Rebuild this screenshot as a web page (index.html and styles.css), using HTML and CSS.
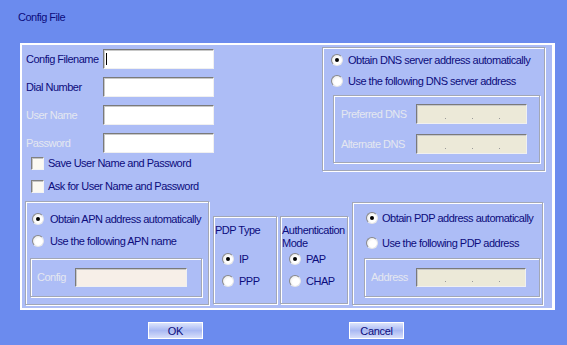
FILE: index.html
```html
<!DOCTYPE html>
<html lang="en">
<head>
    <meta charset="UTF-8">
    <title>Config File</title>
    <link rel="stylesheet" href="styles.css">
</head>
<body>
    <div class="title">Config File</div>

    <div class="panel">
        <div class="top-row">
            <div class="form">
                <div class="form-row">
                    <span class="label">Config Filename</span>
                    <div class="field"><span class="caret"></span></div>
                </div>
                <div class="form-row">
                    <span class="label">Dial Number</span>
                    <div class="field"></div>
                </div>
                <div class="form-row">
                    <span class="label disabled">User Name</span>
                    <div class="field"></div>
                </div>
                <div class="form-row">
                    <span class="label disabled">Password</span>
                    <div class="field"></div>
                </div>
                <div class="check-row">
                    <span class="checkbox"></span>
                    <span>Save User Name and Password</span>
                </div>
                <div class="check-row second">
                    <span class="checkbox"></span>
                    <span>Ask for User Name and Password</span>
                </div>
            </div>

            <div class="group dns-box">
                <div class="radio-row">
                    <span class="radio checked"></span>
                    <span>Obtain DNS server address automatically</span>
                </div>
                <div class="radio-row">
                    <span class="radio"></span>
                    <span>Use the following DNS server address</span>
                </div>
                <div class="group dns-inner">
                    <div class="ip-row">
                        <span class="label disabled dns-label">Preferred DNS</span>
                        <div class="field ip"><i></i><i></i><i></i></div>
                    </div>
                    <div class="ip-row">
                        <span class="label disabled dns-label">Alternate DNS</span>
                        <div class="field ip"><i></i><i></i><i></i></div>
                    </div>
                </div>
            </div>
        </div>

        <div class="bottom-row">
            <div class="group apn-box">
                <div class="radio-row">
                    <span class="radio checked"></span>
                    <span>Obtain APN address automatically</span>
                </div>
                <div class="radio-row">
                    <span class="radio"></span>
                    <span>Use the following APN name</span>
                </div>
                <div class="group apn-inner">
                    <span class="label disabled apn-label">Config</span>
                    <div class="field apn-field"></div>
                </div>
            </div>

            <div class="group type-box pdp-type">
                <div class="type-title">PDP Type</div>
                <div class="radio-row">
                    <span class="radio checked"></span>
                    <span>IP</span>
                </div>
                <div class="radio-row">
                    <span class="radio"></span>
                    <span>PPP</span>
                </div>
            </div>

            <div class="group type-box auth-type">
                <div class="type-title">Authentication<br>Mode</div>
                <div class="radio-row">
                    <span class="radio checked"></span>
                    <span>PAP</span>
                </div>
                <div class="radio-row">
                    <span class="radio"></span>
                    <span>CHAP</span>
                </div>
            </div>

            <div class="group pdp-box">
                <div class="radio-row">
                    <span class="radio checked"></span>
                    <span>Obtain PDP address automatically</span>
                </div>
                <div class="radio-row">
                    <span class="radio"></span>
                    <span>Use the following PDP address</span>
                </div>
                <div class="group pdp-inner">
                    <span class="label disabled pdp-label">Address</span>
                    <div class="field ip"><i></i><i></i><i></i></div>
                </div>
            </div>
        </div>
    </div>

    <div class="buttons">
        <button class="btn">OK</button>
        <button class="btn">Cancel</button>
    </div>
</body>
</html>
```

FILE: styles.css
```css
* {
    box-sizing: border-box;
}
body {
    margin: 0;
    width: 567px;
    height: 345px;
    overflow: hidden;
    background-color: #6b8bee;
    font-family: "Liberation Sans", Arial, sans-serif;
    font-size: 11px;
    letter-spacing: -0.5px;
    color: #0c0c7c;
}
.title {
    padding: 10px 0 0 18px;
    height: 43px;
    line-height: 14px;
}
.panel {
    margin-left: 20px;
    width: 535px;
    height: 267px;
    background-color: #adbdf6;
    border: 2px solid #fff;
    border-right-width: 3px;
}
.top-row {
    display: flex;
    align-items: flex-start;
    height: 156px;
    padding: 2px 0 0 4px;
}
.form {
    width: 296px;
    padding-top: 2px;
}
.form-row {
    display: flex;
    align-items: center;
    height: 20px;
    margin-bottom: 8px;
}
.label {
    flex-shrink: 0;
    width: 77px;
    white-space: nowrap;
}
.label.disabled {
    color: #e4e7f0;
}
.field {
    position: relative;
    flex-shrink: 0;
    width: 111px;
    height: 20px;
    background-color: #fff;
    border: 1px solid;
    border-color: #7a7a7a #f0f0f0 #f0f0f0 #7a7a7a;
    box-shadow: inset 1px 1px 0 #c8c8c8;
}
.caret {
    position: absolute;
    left: 2px;
    top: 3px;
    width: 1px;
    height: 12px;
    background-color: #000;
}
.check-row {
    display: flex;
    align-items: center;
    gap: 4px;
    height: 16px;
    margin: -6px 0 0 5px;
}
.check-row.second {
    margin-top: 7px;
}
.checkbox {
    flex-shrink: 0;
    width: 13px;
    height: 13px;
    background-color: #fbf9f2;
    border: 1px solid;
    border-color: #808080 #f4f4f4 #f4f4f4 #808080;
    box-shadow: inset 1px 1px 0 #c4c4c4;
}
.group {
    flex-shrink: 0;
    border: 1px solid #a2a7b6;
    box-shadow: inset 1px 1px 0 #fff, 1px 1px 0 #fff;
}
.radio-row {
    display: flex;
    align-items: center;
    gap: 5px;
    height: 14px;
    white-space: nowrap;
}
.radio {
    position: relative;
    flex-shrink: 0;
    width: 12px;
    height: 12px;
    border-radius: 50%;
    border: 1px solid;
    border-color: #8a8a8a #e8e8e8 #e8e8e8 #8a8a8a;
    background: radial-gradient(circle at 60% 60%, #fff 40%, #dcdcdc 100%);
}
.radio.checked::after {
    content: "";
    position: absolute;
    left: 3px;
    top: 3px;
    width: 4px;
    height: 4px;
    border-radius: 50%;
    background-color: #000;
}
.dns-box {
    width: 223px;
    height: 124px;
    padding: 5px 0 0 8px;
}
.dns-box .radio-row + .radio-row {
    margin-top: 7px;
}
.dns-inner {
    width: 207px;
    height: 68px;
    margin: 7px 0 0 2px;
    padding: 8px 0 0 7px;
}
.ip-row {
    display: flex;
    align-items: center;
    margin-bottom: 10px;
}
.dns-label {
    width: 75px;
}
.field.ip {
    display: flex;
    align-items: flex-end;
    gap: 26px;
    padding: 0 0 4px 28px;
    background-color: #ece9d8;
}
.field.ip i {
    width: 1px;
    height: 1px;
    background-color: #9a9a9a;
}
.bottom-row {
    display: flex;
    align-items: flex-start;
    margin-left: 3px;
}
.apn-box {
    width: 184px;
    height: 104px;
    padding: 10px 0 0 6px;
}
.apn-box .radio-row {
    gap: 6px;
}
.apn-box .radio-row + .radio-row {
    margin-top: 8px;
}
.apn-inner {
    display: flex;
    align-items: flex-start;
    width: 172px;
    height: 39px;
    margin: 10px 0 0 -2px;
    padding: 9px 0 0 6px;
}
.apn-label {
    width: 38px;
    line-height: 19px;
}
.apn-field {
    width: 112px;
    height: 19px;
    background-color: #f7efe8;
}
.type-box {
    height: 88px;
    margin-top: 15px;
    padding: 7px 0 0 1px;
}
.pdp-type {
    width: 64px;
    margin-left: 4px;
}
.auth-type {
    width: 68px;
    margin-left: 3px;
}
.type-title {
    height: 26px;
    line-height: 13px;
    margin-bottom: 2px;
}
.type-box .radio-row {
    margin-left: 7px;
}
.type-box .radio-row + .radio-row {
    margin-top: 8px;
}
.pdp-box {
    width: 191px;
    height: 103px;
    margin: 1px 0 0 4px;
    padding: 8px 0 0 13px;
}
.pdp-box .radio-row {
    gap: 4px;
}
.pdp-box .radio-row + .radio-row {
    margin-top: 11px;
}
.pdp-inner {
    display: flex;
    align-items: flex-start;
    width: 176px;
    height: 39px;
    margin: 8px 0 0 -2px;
    padding: 9px 0 0 6px;
}
.pdp-label {
    width: 45px;
    line-height: 19px;
}
.pdp-inner .field.ip {
    width: 110px;
    height: 19px;
}
.buttons {
    display: flex;
    gap: 146px;
    padding: 12px 0 0 148px;
}
.btn {
    width: 55px;
    height: 17px;
    padding: 0;
    border: 1px solid #fff;
    background: linear-gradient(#dce4fc, #a9b9f3 50%, #d6defa);
    font-family: "Liberation Sans", Arial, sans-serif;
    font-size: 11px;
    letter-spacing: -0.3px;
    color: #0c0c7c;
}
```
